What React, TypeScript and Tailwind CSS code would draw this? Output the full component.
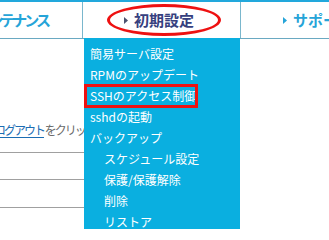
import React from "react";

const Tri = ({ color }: { color: string }) => (
  <svg width="4" height="7" viewBox="0 0 4 7" className="shrink-0">
    <path d="M0 0 L4 3.5 L0 7 Z" fill={color} />
  </svg>
);

const items: { label: string; indent?: boolean }[] = [
  { label: "簡易サーバ設定" },
  { label: "RPMのアップデート" },
  { label: "SSHのアクセス制御" },
  { label: "sshdの起動" },
  { label: "バックアップ" },
  { label: "スケジュール設定", indent: true },
  { label: "保護/保護解除", indent: true },
  { label: "削除", indent: true },
  { label: "リストア", indent: true },
];

export default function App() {
  return (
    <div
      className="relative w-[329px] h-[229px] overflow-hidden bg-white"
      style={{ fontFamily: '"Noto Sans CJK JP", "Noto Sans", sans-serif' }}
    >
      <nav className="flex h-[39px] border-t-2 border-b border-t-[#22a8dc] border-b-[#6aa9c2]">
        <div className="w-[82px] shrink-0 overflow-hidden flex items-center justify-end pr-[34px] whitespace-nowrap">
          <div className="flex items-center gap-[6px] text-[15px] font-bold text-[#26a4d8] tracking-[-3px]">
            <Tri color="#26a4d8" />
            <span>メンテナンス</span>
          </div>
        </div>
        <div className="w-[158px] shrink-0 border-l border-[#7ab7cd] flex items-center pl-[41px]">
          <div className="flex items-center gap-[6px] text-[15px] font-bold text-[#36407e] whitespace-nowrap">
            <Tri color="#4a5270" />
            <span>初期設定</span>
          </div>
        </div>
        <div className="flex-1 border-l border-[#7ab7cd] flex items-center pl-[42px] overflow-hidden">
          <div className="flex items-center gap-[6px] text-[15px] font-bold text-[#26a4d8] whitespace-nowrap">
            <Tri color="#26a4d8" />
            <span>サポート</span>
          </div>
        </div>
      </nav>

      <div className="w-[84px] overflow-hidden">
        <div className="mt-[83px] ml-[-6px] leading-[16px] text-[12px] tracking-[-2px] whitespace-nowrap">
          <span className="text-[#1c6db3] underline underline-offset-2">ログアウト</span>
          <span className="text-[#6b6b6b]"> をクリックして</span>
        </div>
        <div className="h-[15px] border-b border-[#a0a0a0]" />
        <div className="h-[27px] border-b border-[#a0a0a0]" />
        <div className="h-[28px] border-b border-[#a0a0a0]" />
      </div>

      {/* dropdown menu */}
      <div className="absolute left-[84px] top-[38px] bottom-0 w-[156px] bg-[#0aafe0] pt-[5px]">
        {items.map((it) => (
          <div
            key={it.label}
            className={`leading-[21px] text-[12px] text-white whitespace-nowrap ${
              it.indent ? "pl-[20px]" : "pl-[6px]"
            }`}
          >
            {it.label}
          </div>
        ))}
        <div className="absolute left-0 top-[46px] w-[114px] h-[24px] border-[3px] border-[#ee1111]" />
      </div>

      {/* annotation ellipse */}
      <div className="absolute left-[107px] top-[4px] w-[114px] h-[32px] rounded-[50%] border-[3px] border-[#ee1111]" />
    </div>
  );
}
